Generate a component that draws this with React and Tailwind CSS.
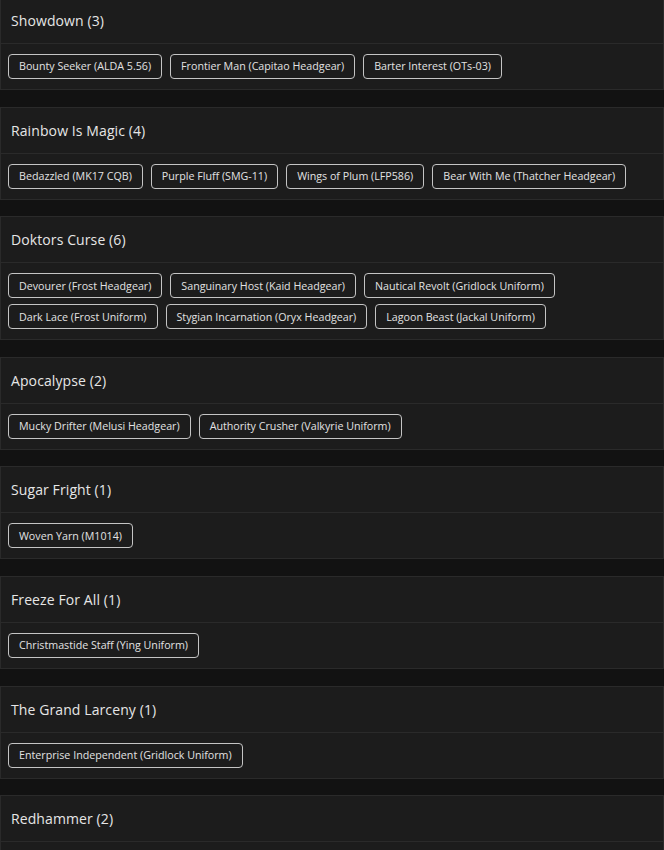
import React from "react";

const sections = [
  { title: "Showdown (3)", items: ["Bounty Seeker (ALDA 5.56)", "Frontier Man (Capitao Headgear)", "Barter Interest (OTs-03)"] },
  { title: "Rainbow Is Magic (4)", items: ["Bedazzled (MK17 CQB)", "Purple Fluff (SMG-11)", "Wings of Plum (LFP586)", "Bear With Me (Thatcher Headgear)"] },
  { title: "Doktors Curse (6)", items: ["Devourer (Frost Headgear)", "Sanguinary Host (Kaid Headgear)", "Nautical Revolt (Gridlock Uniform)", "Dark Lace (Frost Uniform)", "Stygian Incarnation (Oryx Headgear)", "Lagoon Beast (Jackal Uniform)"] },
  { title: "Apocalypse (2)", items: ["Mucky Drifter (Melusi Headgear)", "Authority Crusher (Valkyrie Uniform)"] },
  { title: "Sugar Fright (1)", items: ["Woven Yarn (M1014)"] },
  { title: "Freeze For All (1)", items: ["Christmastide Staff (Ying Uniform)"] },
  { title: "The Grand Larceny (1)", items: ["Enterprise Independent (Gridlock Uniform)"] },
  { title: "Redhammer (2)", items: [] },
];

export default function App() {
  return (
    <div className="h-[850px] w-[664px] overflow-hidden bg-[#121212] font-['Open_Sans',sans-serif]">
      <div className="-mt-[3px] flex flex-col gap-[16.6px]">
        {sections.map((s) => (
          <div key={s.title} className="border border-[#2a2a2a] bg-[#1c1c1c]">
            <div className="flex h-[46px] items-center border-b border-[#2a2a2a] px-[10px] text-[14px] tracking-[0.1px] text-[#e6e6e6]">
              {s.title}
            </div>
            <div className="flex min-h-[45px] flex-wrap gap-x-[8px] gap-y-[6px] px-[7px] py-[10px]">
              {s.items.map((it) => (
                <div
                  key={it}
                  className="flex h-[25px] items-center rounded-[4px] border border-[#c4c4c4] px-[10px] text-[10.7px] text-[#e2e2e2]"
                >
                  {it}
                </div>
              ))}
            </div>
          </div>
        ))}
      </div>
    </div>
  );
}
